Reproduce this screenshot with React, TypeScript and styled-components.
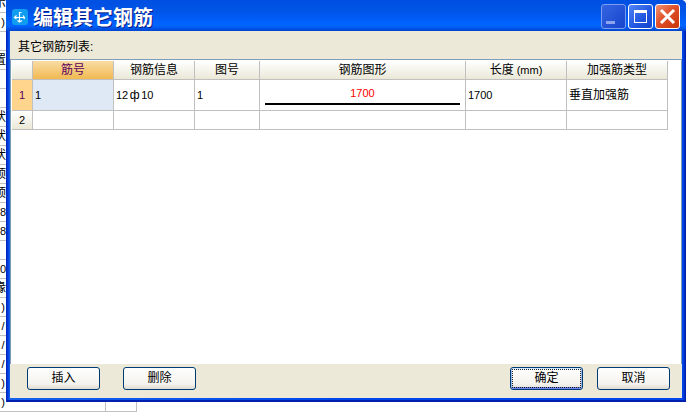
import React from "react";
import styled, { createGlobalStyle, css } from "styled-components";

const GlobalStyle = createGlobalStyle`
  * { box-sizing: border-box; }
  body {
    margin: 0;
    background: #fff;
    color: #000;
    font: 12px/16px "Liberation Sans", "Noto Sans CJK SC", sans-serif;
  }
`;

const Desktop = styled.div`
  display: grid;
  grid-template-columns: minmax(0, 1fr);
  min-height: 100vh;
  overflow: hidden;
`;

const SheetLayer = styled.div`
  grid-area: 1 / 1;
  overflow: hidden;
`;

const Sheet = styled.table`
  border-collapse: separate;
  border-spacing: 0;
  table-layout: fixed;
  width: 137px;
  margin-top: -6px;
`;

const SheetCell = styled.td`
  height: 19px;
  padding: 0;
  border-right: 1px solid #c0c0c0;
  border-bottom: 1px solid #c0c0c0;
  line-height: 18px;
  white-space: nowrap;
`;

const Clipped = styled.div<{ $latin: boolean }>`
  display: flex;
  justify-content: ${({ $latin }) => ($latin ? "center" : "flex-end")};
  width: 6px;
  height: 18px;
  font-size: ${({ $latin }) => ($latin ? 11 : 12)}px;
`;

const Dialog = styled.section`
  grid-area: 1 / 1;
  z-index: 1;
  display: flex;
  flex-direction: column;
  margin: 0 6px 10px;
  border-radius: 0 5px 0 0;
  background: linear-gradient(to right, #001fb8, #0040dc 2px, #1660ee 4px, #0046ea 50%, #0046ea calc(100% - 3px), #0018a0);
  box-shadow: inset 0 -2px #0020b0;
`;

const TitleBar = styled.header`
  display: flex;
  align-items: center;
  height: 31px;
  padding: 2px 6px 0 6px;
  border-radius: 0 5px 0 0;
  background: linear-gradient(#0050e2, #0054e6 35%, #005cf6 60%, #0066ff 82%, #0058ee 90%, #0044cc);
`;

const Title = styled.h1`
  flex: 1;
  margin: 0 0 0 5px;
  color: #fff;
  font: bold 20px/26px "Noto Sans CJK SC", sans-serif;
  text-shadow: 1px 1px 0 #0a1883;
`;

const Controls = styled.div`
  display: flex;
  gap: 2px;
`;

const controlFill = {
  minimize: "linear-gradient(135deg, #3565e2, #1744cb)",
  maximize: "linear-gradient(135deg, #5386f5, #1f55e0 60%, #1745c8)",
  close: "linear-gradient(135deg, #ee9374, #e0512b 45%, #c83508)",
};

const ControlButton = styled.button<{ $kind: keyof typeof controlFill }>`
  display: grid;
  place-items: center;
  width: 25px;
  height: 25px;
  padding: 0;
  border: 1px solid ${({ $kind }) => ($kind === "minimize" ? "#7c9cf0" : "#fff")};
  border-radius: 3px;
  background: ${({ $kind }) => controlFill[$kind]};
`;

const Content = styled.div`
  flex: 1;
  display: flex;
  flex-direction: column;
  margin: 0 4px 4px;
  background: #ece9d8;
`;

const Caption = styled.h2`
  margin: 0;
  padding: 8px 8px 4px;
  font-size: 12px;
  font-weight: normal;
  line-height: 16px;
`;

const ListArea = styled.div`
  flex: 1;
  padding: 1px 0 0 1px;
  border: 1px solid #7f9db9;
  border-bottom: 0;
  background: #fff;
`;

const Grid = styled.table`
  border-collapse: separate;
  border-spacing: 0;
  table-layout: fixed;
  width: 656px;
`;

const cell = css`
  padding: 0 2px;
  border-right: 1px solid #c0c0c0;
  border-bottom: 1px solid #c0c0c0;
  font-weight: normal;
  line-height: 16px;
  white-space: nowrap;
`;

const ColumnHead = styled.th<{ $active?: boolean }>`
  ${cell}
  height: 19px;
  line-height: 18px;
  color: ${({ $active }) => ($active ? "#5c0060" : "#000")};
  background: ${({ $active }) =>
    $active ? "linear-gradient(#f8dca4, #f1b951)" : "linear-gradient(#fff, #f5f4ec 50%, #ebe8d7)"};
`;

const RowHead = styled.th<{ $active?: boolean }>`
  ${cell}
  color: ${({ $active }) => ($active ? "#5c0060" : "#000")};
  background: ${({ $active }) => ($active ? "#ffd58d" : "linear-gradient(#fff, #ebe8d7)")};
`;

const Row = styled.tr<{ $tall?: boolean }>`
  height: ${({ $tall }) => ($tall ? 31 : 19)}px;
`;

const Cell = styled.td<{ $selected?: boolean }>`
  ${cell}
  background: ${({ $selected }) => ($selected ? "#dfe9f5" : "#fff")};
`;

const Numeric = styled.span`
  font-size: 11px;
`;

const Diameter = styled.span`
  display: inline-block;
  width: 13px;
  font-family: "Liberation Sans", sans-serif;
  font-size: 12px;
  text-align: center;
`;

const BarShape = styled.div`
  margin: 0 3px;
  border-bottom: 2px solid #000;
  color: #f00;
  font-size: 11px;
  line-height: 14px;
  padding-bottom: 3px;
  text-align: center;
`;

const Footer = styled.footer`
  display: flex;
  justify-content: space-between;
  padding: 3px 12px 8px 17px;
`;

const ButtonGroup = styled.div<{ $gap: number }>`
  display: flex;
  gap: ${({ $gap }) => $gap}px;
`;

const Button = styled.button<{ $primary?: boolean }>`
  width: 73px;
  height: 23px;
  padding: 0;
  border: 1px solid #003c74;
  border-radius: 3px;
  background: linear-gradient(#fff, #f4f3ee 75%, #dedbd0);
  color: #000;
  font: inherit;
  line-height: 19px;
  ${({ $primary }) =>
    $primary &&
    css`
      outline: 1px dotted #222;
      outline-offset: -3px;
      box-shadow: inset 0 1px #cee7ff, inset 1px 0 #98b8ea, inset -1px 0 #98b8ea, inset 0 -2px #6982ee;
    `}
`;

const columns = [
  { label: "筋号", width: 81 },
  { label: "钢筋信息", width: 81 },
  { label: "图号", width: 65 },
  { label: "钢筋图形", width: 206 },
  { label: "长度", unit: "(mm)", width: 101 },
  { label: "加强筋类型", width: 101 },
];

const sheetRows = [
  "示", ")", "", "置", "", "", "状", "状", "状", "顶", "顶",
  "8", "8", "", "0", "缘", ")", "/", "/", "/", ")", ")",
];

function AppIcon() {
  return (
    <svg width="16" height="16" viewBox="0 0 16 16" aria-hidden="true">
      <rect width="16" height="16" rx="3" fill="#109cf1" />
      <path
        d="M7.5 3V12.5M3 8.5H12.5M7.5 3.5H9.5M4.5 6.5L2.5 8.5L4.5 10M11 6.5L12.5 8.5L12 10M5.5 11.5L7.5 13L10 11.5"
        fill="none"
        stroke="#fff"
        strokeWidth="1.2"
      />
    </svg>
  );
}

export default function App() {
  return (
    <Desktop>
      <GlobalStyle />
      <SheetLayer>
        <Sheet>
          <colgroup>
            <col width="106" />
            <col width="31" />
          </colgroup>
          <tbody>
            {sheetRows.map((text, i) => (
              <tr key={i}>
                <SheetCell><Clipped $latin={text < "~"}>{text}</Clipped></SheetCell>
                <SheetCell />
              </tr>
            ))}
          </tbody>
        </Sheet>
      </SheetLayer>

      <Dialog role="dialog" aria-labelledby="dialog-title">
        <TitleBar>
          <AppIcon />
          <Title id="dialog-title">编辑其它钢筋</Title>
          <Controls>
            <ControlButton $kind="minimize" aria-label="最小化" disabled>
              <svg width="21" height="21"><rect x="3" y="15" width="9" height="3" fill="#8fa4ee" /></svg>
            </ControlButton>
            <ControlButton $kind="maximize" aria-label="最大化">
              <svg width="21" height="21">
                <path d="M4 4H17V17H4ZM5 7V16H16V7Z" fill="#fff" fillRule="evenodd" />
              </svg>
            </ControlButton>
            <ControlButton $kind="close" aria-label="关闭">
              <svg width="21" height="21">
                <path d="M4 4L17 17M17 4L4 17" stroke="#fff" strokeWidth="3" />
              </svg>
            </ControlButton>
          </Controls>
        </TitleBar>

        <Content>
          <Caption id="list-caption">其它钢筋列表:</Caption>
          <ListArea>
            <Grid aria-labelledby="list-caption">
              <colgroup>
                <col width="21" />
                {columns.map((c) => <col key={c.label} width={c.width} />)}
              </colgroup>
              <thead>
                <tr>
                  <ColumnHead />
                  {columns.map((c, i) => (
                    <ColumnHead key={c.label} scope="col" $active={i === 0}>
                      {c.label}{c.unit && <Numeric> {c.unit}</Numeric>}
                    </ColumnHead>
                  ))}
                </tr>
              </thead>
              <tbody>
                <Row $tall>
                  <RowHead scope="row" $active><Numeric>1</Numeric></RowHead>
                  <Cell $selected><Numeric>1</Numeric></Cell>
                  <Cell><Numeric>12<Diameter>ф</Diameter>10</Numeric></Cell>
                  <Cell><Numeric>1</Numeric></Cell>
                  <Cell><BarShape>1700</BarShape></Cell>
                  <Cell><Numeric>1700</Numeric></Cell>
                  <Cell>垂直加强筋</Cell>
                </Row>
                <Row>
                  <RowHead scope="row"><Numeric>2</Numeric></RowHead>
                  {columns.map((c) => <Cell key={c.label} />)}
                </Row>
              </tbody>
            </Grid>
          </ListArea>
          <Footer>
            <ButtonGroup $gap={23}>
              <Button type="button">插入</Button>
              <Button type="button">删除</Button>
            </ButtonGroup>
            <ButtonGroup $gap={14}>
              <Button type="button" $primary>确定</Button>
              <Button type="button">取消</Button>
            </ButtonGroup>
          </Footer>
        </Content>
      </Dialog>
    </Desktop>
  );
}
